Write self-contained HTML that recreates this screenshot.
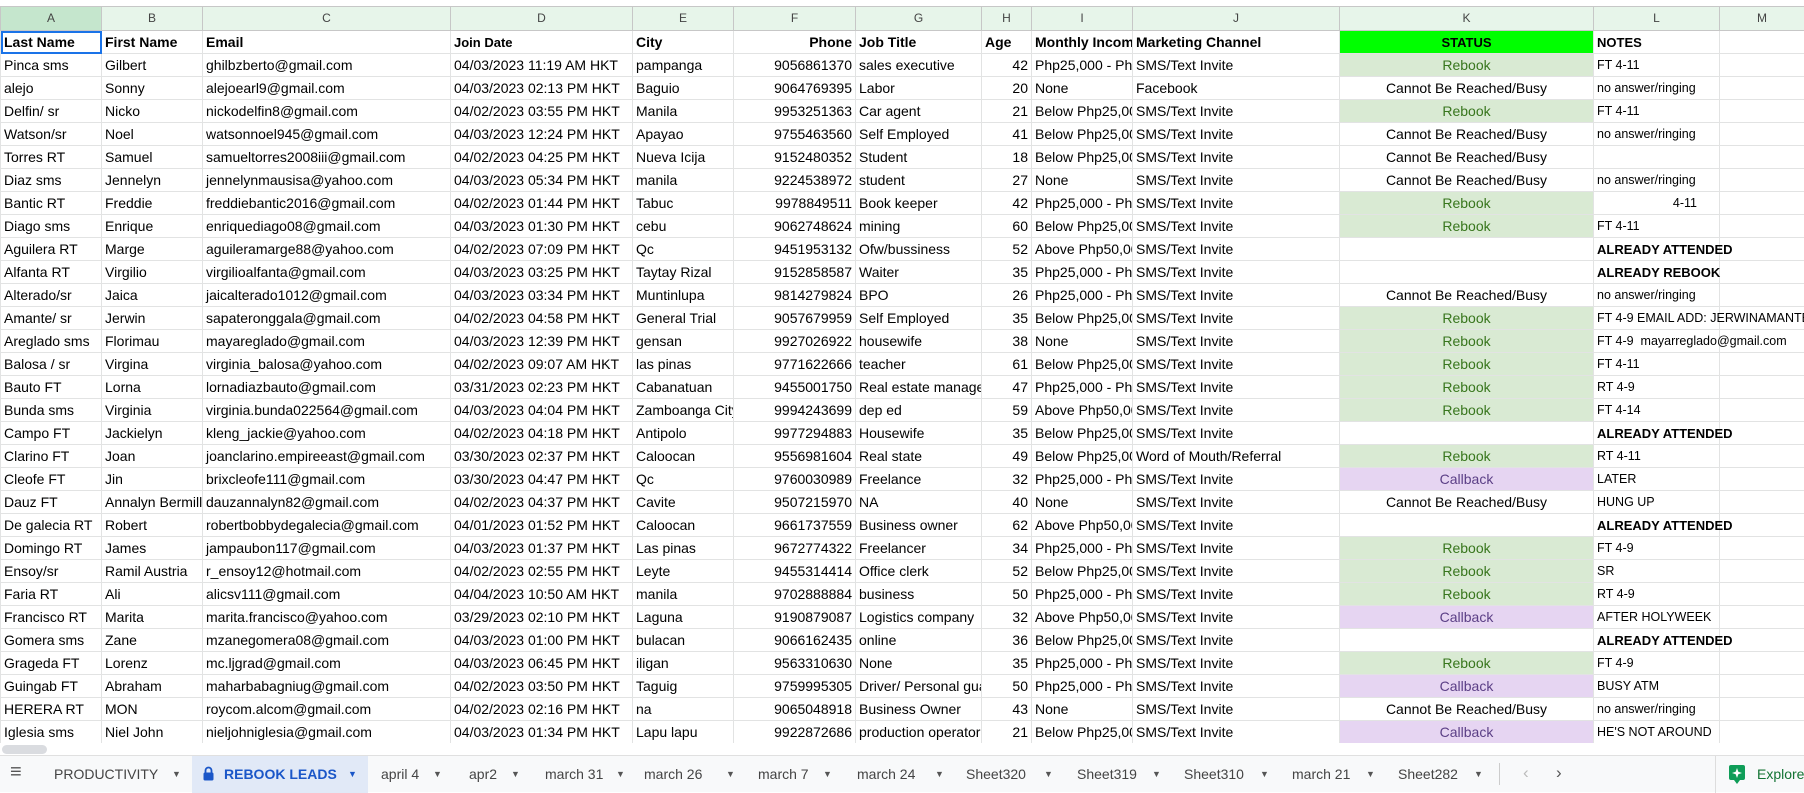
<!DOCTYPE html>
<html><head><meta charset="utf-8"><style>
*{box-sizing:border-box;margin:0;padding:0}
body{width:1804px;height:792px;overflow:hidden;background:#fff;font-family:"Liberation Sans",Arial,sans-serif;position:relative}
table{position:absolute;left:0;top:6px;border-collapse:collapse;table-layout:fixed;width:1804px}
td{height:23px;border:1px solid #e2e3e3;font-size:14px;color:#000;white-space:nowrap;overflow:hidden;padding:0 3px;line-height:21px}
tr.ch td{height:24px;background:#e7f5ea;color:#444;font-size:12px;text-align:center;border-color:#c7c7c7}
tr.ch td.sel{background:#c5e6cd}
tr.h td{font-weight:bold}
.r{text-align:right}
.c{text-align:center}
.rb{background:#d9ead3;color:#38761d;text-align:center}
.cb{background:#e6d5f2;color:#5b3f86;text-align:center}
.n{font-size:12.5px}
.b{font-weight:bold}
td.ov{overflow:visible}
.st{background:#00ff00!important;text-align:center}
.a1{outline:2px solid #1a73e8;outline-offset:-2px}
#sb{position:absolute;left:0;top:743px;width:1804px;height:14px;background:#fff}
#sb div{position:absolute;left:2px;top:2px;width:45px;height:9px;border-radius:5px;background:#dadce0}
#tabs{position:absolute;left:0;top:755px;width:1804px;height:37px;background:#f8f9fa;border-top:1px solid #e0e0e0;font-size:14px;color:#444}
#tabs span{position:absolute;top:10px;white-space:nowrap}
#tabs span.ar{font-size:9px;color:#555;top:13px}
#act{position:absolute;left:192px;top:0;width:176px;height:37px;background:#e1e9f7}
</style></head><body>
<table>
<colgroup><col style="width:101px"><col style="width:101px"><col style="width:248px"><col style="width:182px"><col style="width:101px"><col style="width:122px"><col style="width:126px"><col style="width:50px"><col style="width:101px"><col style="width:207px"><col style="width:254px"><col style="width:126px"><col style="width:85px"></colgroup>
<tr class="ch"><td class="sel">A</td><td>B</td><td>C</td><td>D</td><td>E</td><td>F</td><td>G</td><td>H</td><td>I</td><td>J</td><td>K</td><td>L</td><td>M</td></tr>
<tr class="h"><td class="a1">Last Name</td><td>First Name</td><td>Email</td><td style="font-size:13px">Join Date</td><td>City</td><td class="r">Phone</td><td>Job Title</td><td>Age</td><td>Monthly Income</td><td>Marketing Channel</td><td class="st" style="font-size:13px">STATUS</td><td style="font-size:13px">NOTES</td><td></td></tr>
<tr><td>Pinca sms</td><td>Gilbert</td><td>ghilbzberto@gmail.com</td><td>04/03/2023 11:19 AM HKT</td><td>pampanga</td><td class="r">9056861370</td><td>sales executive</td><td class="r">42</td><td>Php25,000 - Php50,000</td><td>SMS/Text Invite</td><td class="rb">Rebook</td><td class="n">FT 4-11</td><td></td></tr>
<tr><td>alejo</td><td>Sonny</td><td>alejoearl9@gmail.com</td><td>04/03/2023 02:13 PM HKT</td><td>Baguio</td><td class="r">9064769395</td><td>Labor</td><td class="r">20</td><td>None</td><td>Facebook</td><td class="c">Cannot Be Reached/Busy</td><td class="n">no answer/ringing</td><td></td></tr>
<tr><td>Delfin/ sr</td><td>Nicko</td><td>nickodelfin8@gmail.com</td><td>04/02/2023 03:55 PM HKT</td><td>Manila</td><td class="r">9953251363</td><td>Car agent</td><td class="r">21</td><td>Below Php25,000</td><td>SMS/Text Invite</td><td class="rb">Rebook</td><td class="n">FT 4-11</td><td></td></tr>
<tr><td>Watson/sr</td><td>Noel</td><td>watsonnoel945@gmail.com</td><td>04/03/2023 12:24 PM HKT</td><td>Apayao</td><td class="r">9755463560</td><td>Self Employed</td><td class="r">41</td><td>Below Php25,000</td><td>SMS/Text Invite</td><td class="c">Cannot Be Reached/Busy</td><td class="n">no answer/ringing</td><td></td></tr>
<tr><td>Torres RT</td><td>Samuel</td><td>samueltorres2008iii@gmail.com</td><td>04/02/2023 04:25 PM HKT</td><td>Nueva Icija</td><td class="r">9152480352</td><td>Student</td><td class="r">18</td><td>Below Php25,000</td><td>SMS/Text Invite</td><td class="c">Cannot Be Reached/Busy</td><td></td><td></td></tr>
<tr><td>Diaz sms</td><td>Jennelyn</td><td>jennelynmausisa@yahoo.com</td><td>04/03/2023 05:34 PM HKT</td><td>manila</td><td class="r">9224538972</td><td>student</td><td class="r">27</td><td>None</td><td>SMS/Text Invite</td><td class="c">Cannot Be Reached/Busy</td><td class="n">no answer/ringing</td><td></td></tr>
<tr><td>Bantic RT</td><td>Freddie</td><td>freddiebantic2016@gmail.com</td><td>04/02/2023 01:44 PM HKT</td><td>Tabuc</td><td class="r">9978849511</td><td>Book keeper</td><td class="r">42</td><td>Php25,000 - Php50,000</td><td>SMS/Text Invite</td><td class="rb">Rebook</td><td class="n" style="text-align:right;padding-right:22px">4-11</td><td></td></tr>
<tr><td>Diago sms</td><td>Enrique</td><td>enriquediago08@gmail.com</td><td>04/03/2023 01:30 PM HKT</td><td>cebu</td><td class="r">9062748624</td><td>mining</td><td class="r">60</td><td>Below Php25,000</td><td>SMS/Text Invite</td><td class="rb">Rebook</td><td class="n">FT 4-11</td><td></td></tr>
<tr><td>Aguilera RT</td><td>Marge</td><td>aguileramarge88@yahoo.com</td><td>04/02/2023 07:09 PM HKT</td><td>Qc</td><td class="r">9451953132</td><td>Ofw/bussiness</td><td class="r">52</td><td>Above Php50,000</td><td>SMS/Text Invite</td><td></td><td class="b ov" style="font-size:13px">ALREADY ATTENDED</td><td></td></tr>
<tr><td>Alfanta RT</td><td>Virgilio</td><td>virgilioalfanta@gmail.com</td><td>04/03/2023 03:25 PM HKT</td><td>Taytay Rizal</td><td class="r">9152858587</td><td>Waiter</td><td class="r">35</td><td>Php25,000 - Php50,000</td><td>SMS/Text Invite</td><td></td><td class="b ov" style="font-size:13px">ALREADY REBOOK</td><td></td></tr>
<tr><td>Alterado/sr</td><td>Jaica</td><td>jaicalterado1012@gmail.com</td><td>04/03/2023 03:34 PM HKT</td><td>Muntinlupa</td><td class="r">9814279824</td><td>BPO</td><td class="r">26</td><td>Php25,000 - Php50,000</td><td>SMS/Text Invite</td><td class="c">Cannot Be Reached/Busy</td><td class="n">no answer/ringing</td><td></td></tr>
<tr><td>Amante/ sr</td><td>Jerwin</td><td>sapateronggala@gmail.com</td><td>04/02/2023 04:58 PM HKT</td><td>General Trial</td><td class="r">9057679959</td><td>Self Employed</td><td class="r">35</td><td>Below Php25,000</td><td>SMS/Text Invite</td><td class="rb">Rebook</td><td class="n ov">FT 4-9 EMAIL ADD: JERWINAMANTE@GMAIL.COM</td><td></td></tr>
<tr><td>Areglado sms</td><td>Florimau</td><td>mayareglado@gmail.com</td><td>04/03/2023 12:39 PM HKT</td><td>gensan</td><td class="r">9927026922</td><td>housewife</td><td class="r">38</td><td>None</td><td>SMS/Text Invite</td><td class="rb">Rebook</td><td class="n ov">FT 4-9&nbsp; mayarreglado@gmail.com</td><td></td></tr>
<tr><td>Balosa / sr</td><td>Virgina</td><td>virginia_balosa@yahoo.com</td><td>04/02/2023 09:07 AM HKT</td><td>las pinas</td><td class="r">9771622666</td><td>teacher</td><td class="r">61</td><td>Below Php25,000</td><td>SMS/Text Invite</td><td class="rb">Rebook</td><td class="n">FT 4-11</td><td></td></tr>
<tr><td>Bauto FT</td><td>Lorna</td><td>lornadiazbauto@gmail.com</td><td>03/31/2023 02:23 PM HKT</td><td>Cabanatuan</td><td class="r">9455001750</td><td>Real estate manager</td><td class="r">47</td><td>Php25,000 - Php50,000</td><td>SMS/Text Invite</td><td class="rb">Rebook</td><td class="n">RT 4-9</td><td></td></tr>
<tr><td>Bunda sms</td><td>Virginia</td><td>virginia.bunda022564@gmail.com</td><td>04/03/2023 04:04 PM HKT</td><td>Zamboanga City</td><td class="r">9994243699</td><td>dep ed</td><td class="r">59</td><td>Above Php50,000</td><td>SMS/Text Invite</td><td class="rb">Rebook</td><td class="n">FT 4-14</td><td></td></tr>
<tr><td>Campo FT</td><td>Jackielyn</td><td>kleng_jackie@yahoo.com</td><td>04/02/2023 04:18 PM HKT</td><td>Antipolo</td><td class="r">9977294883</td><td>Housewife</td><td class="r">35</td><td>Below Php25,000</td><td>SMS/Text Invite</td><td></td><td class="b ov" style="font-size:13px">ALREADY ATTENDED</td><td></td></tr>
<tr><td>Clarino FT</td><td>Joan</td><td>joanclarino.empireeast@gmail.com</td><td>03/30/2023 02:37 PM HKT</td><td>Caloocan</td><td class="r">9556981604</td><td>Real state</td><td class="r">49</td><td>Below Php25,000</td><td>Word of Mouth/Referral</td><td class="rb">Rebook</td><td class="n">RT 4-11</td><td></td></tr>
<tr><td>Cleofe FT</td><td>Jin</td><td>brixcleofe111@gmail.com</td><td>03/30/2023 04:47 PM HKT</td><td>Qc</td><td class="r">9760030989</td><td>Freelance</td><td class="r">32</td><td>Php25,000 - Php50,000</td><td>SMS/Text Invite</td><td class="cb">Callback</td><td class="n">LATER</td><td></td></tr>
<tr><td>Dauz FT</td><td>Annalyn Bermillo</td><td>dauzannalyn82@gmail.com</td><td>04/02/2023 04:37 PM HKT</td><td>Cavite</td><td class="r">9507215970</td><td>NA</td><td class="r">40</td><td>None</td><td>SMS/Text Invite</td><td class="c">Cannot Be Reached/Busy</td><td class="n">HUNG UP</td><td></td></tr>
<tr><td>De galecia RT</td><td>Robert</td><td>robertbobbydegalecia@gmail.com</td><td>04/01/2023 01:52 PM HKT</td><td>Caloocan</td><td class="r">9661737559</td><td>Business owner</td><td class="r">62</td><td>Above Php50,000</td><td>SMS/Text Invite</td><td></td><td class="b ov" style="font-size:13px">ALREADY ATTENDED</td><td></td></tr>
<tr><td>Domingo RT</td><td>James</td><td>jampaubon117@gmail.com</td><td>04/03/2023 01:37 PM HKT</td><td>Las pinas</td><td class="r">9672774322</td><td>Freelancer</td><td class="r">34</td><td>Php25,000 - Php50,000</td><td>SMS/Text Invite</td><td class="rb">Rebook</td><td class="n">FT 4-9</td><td></td></tr>
<tr><td>Ensoy/sr</td><td>Ramil Austria</td><td>r_ensoy12@hotmail.com</td><td>04/02/2023 02:55 PM HKT</td><td>Leyte</td><td class="r">9455314414</td><td>Office clerk</td><td class="r">52</td><td>Below Php25,000</td><td>SMS/Text Invite</td><td class="rb">Rebook</td><td class="n">SR</td><td></td></tr>
<tr><td>Faria RT</td><td>Ali</td><td>alicsv111@gmail.com</td><td>04/04/2023 10:50 AM HKT</td><td>manila</td><td class="r">9702888884</td><td>business</td><td class="r">50</td><td>Php25,000 - Php50,000</td><td>SMS/Text Invite</td><td class="rb">Rebook</td><td class="n">RT 4-9</td><td></td></tr>
<tr><td>Francisco RT</td><td>Marita</td><td>marita.francisco@yahoo.com</td><td>03/29/2023 02:10 PM HKT</td><td>Laguna</td><td class="r">9190879087</td><td>Logistics company</td><td class="r">32</td><td>Above Php50,000</td><td>SMS/Text Invite</td><td class="cb">Callback</td><td class="n ov">AFTER HOLYWEEK</td><td></td></tr>
<tr><td>Gomera sms</td><td>Zane</td><td>mzanegomera08@gmail.com</td><td>04/03/2023 01:00 PM HKT</td><td>bulacan</td><td class="r">9066162435</td><td>online</td><td class="r">36</td><td>Below Php25,000</td><td>SMS/Text Invite</td><td></td><td class="b ov" style="font-size:13px">ALREADY ATTENDED</td><td></td></tr>
<tr><td>Grageda FT</td><td>Lorenz</td><td>mc.ljgrad@gmail.com</td><td>04/03/2023 06:45 PM HKT</td><td>iligan</td><td class="r">9563310630</td><td>None</td><td class="r">35</td><td>Php25,000 - Php50,000</td><td>SMS/Text Invite</td><td class="rb">Rebook</td><td class="n">FT 4-9</td><td></td></tr>
<tr><td>Guingab FT</td><td>Abraham</td><td>maharbabagniug@gmail.com</td><td>04/02/2023 03:50 PM HKT</td><td>Taguig</td><td class="r">9759995305</td><td>Driver/ Personal guard</td><td class="r">50</td><td>Php25,000 - Php50,000</td><td>SMS/Text Invite</td><td class="cb">Callback</td><td class="n">BUSY ATM</td><td></td></tr>
<tr><td>HERERA RT</td><td>MON</td><td>roycom.alcom@gmail.com</td><td>04/02/2023 02:16 PM HKT</td><td>na</td><td class="r">9065048918</td><td>Business Owner</td><td class="r">43</td><td>None</td><td>SMS/Text Invite</td><td class="c">Cannot Be Reached/Busy</td><td class="n">no answer/ringing</td><td></td></tr>
<tr><td>Iglesia sms</td><td>Niel John</td><td>nieljohniglesia@gmail.com</td><td>04/03/2023 01:34 PM HKT</td><td>Lapu lapu</td><td class="r">9922872686</td><td>production operator</td><td class="r">21</td><td>Below Php25,000</td><td>SMS/Text Invite</td><td class="cb">Callback</td><td class="n ov">HE'S NOT AROUND</td><td></td></tr>
</table>
<div id="sb"><div></div></div>
<div id="tabs">
<div id="act"></div>
<span style="left:10px;top:5px;font-size:20px;color:#555">&#8801;</span>
<span style="left:54px">PRODUCTIVITY</span><span class="ar" style="left:172px">&#9660;</span>
<svg style="position:absolute;left:203px;top:10px" width="11" height="15" viewBox="0 0 11 15"><path d="M2.5 7V4.5a3 3 0 0 1 6 0V7" fill="none" stroke="#1a56c8" stroke-width="1.8"/><rect x="0.5" y="6.5" width="10" height="8" rx="1.5" fill="#1a56c8"/></svg>
<span style="left:224px;color:#1a56c8;font-weight:bold">REBOOK LEADS</span><span class="ar" style="left:348px;color:#1a56c8">&#9660;</span>
<span style="left:381px">april 4</span><span class="ar" style="left:433px">&#9660;</span>
<span style="left:469px">apr2</span><span class="ar" style="left:511px">&#9660;</span>
<span style="left:545px">march 31</span><span class="ar" style="left:616px">&#9660;</span>
<span style="left:644px">march 26</span><span class="ar" style="left:726px">&#9660;</span>
<span style="left:758px">march 7</span><span class="ar" style="left:823px">&#9660;</span>
<span style="left:857px">march 24</span><span class="ar" style="left:935px">&#9660;</span>
<span style="left:966px">Sheet320</span><span class="ar" style="left:1044px">&#9660;</span>
<span style="left:1077px">Sheet319</span><span class="ar" style="left:1152px">&#9660;</span>
<span style="left:1184px">Sheet310</span><span class="ar" style="left:1260px">&#9660;</span>
<span style="left:1292px">march 21</span><span class="ar" style="left:1366px">&#9660;</span>
<span style="left:1398px">Sheet282</span><span class="ar" style="left:1474px">&#9660;</span>
<div style="position:absolute;left:1499px;top:7px;width:1px;height:22px;background:#ccc"></div>
<span style="left:1523px;color:#bbb;font-size:17px;top:7px">&#8249;</span>
<span style="left:1556px;color:#555;font-size:17px;top:7px">&#8250;</span>
<div style="position:absolute;left:1715px;top:0;width:1px;height:37px;background:#ddd"></div>
<svg style="position:absolute;left:1729px;top:9px" width="16" height="19" viewBox="0 0 16 19"><path d="M2 0h12a2 2 0 0 1 2 2v11a2 2 0 0 1-2 2h-3l-3 4-3-4H2a2 2 0 0 1-2-2V2a2 2 0 0 1 2-2z" fill="#0f9d58"/><path d="M8 3l1.3 3.7L13 8l-3.7 1.3L8 13l-1.3-3.7L3 8l3.7-1.3z" fill="#fff"/></svg>
<span style="left:1757px;color:#137333">Explore</span>
</div>
</body></html>
